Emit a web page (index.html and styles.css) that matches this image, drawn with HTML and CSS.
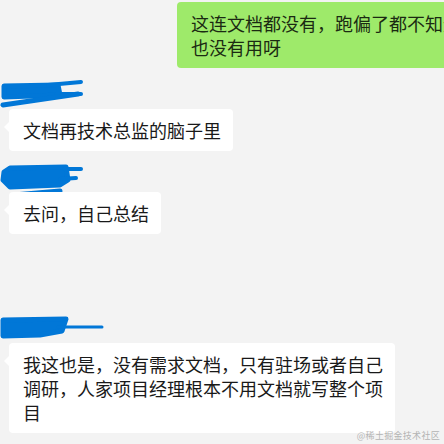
FILE: index.html
```html
<!DOCTYPE html>
<html lang="zh-CN">
<head>
  <meta charset="UTF-8" />
  <meta name="viewport" content="width=device-width, initial-scale=1.0"/>
  <title>聊天记录</title>
  <link rel="stylesheet" href="styles.css">
</head>
<body>
  <div class="chat">
    <div class="msg self">
      <div class="bubble green">这连文档都没有，跑偏了都不知道也没有用呀</div>
    </div>

    <div class="msg first">
      <svg class="name" width="90" height="30" viewBox="0 0 90 30">
        <g stroke="#0177d7" stroke-linecap="round" stroke-linejoin="round" fill="#0177d7">
          <path d="M4 7 L58 6 L60 16 L4 18 Z" stroke-width="5"/>
          <path d="M48 6 L81 3" stroke-width="4"/>
          <path d="M56 15 L81 15" stroke-width="4"/>
          <path d="M3 26 L78 15" stroke-width="5"/>
        </g>
      </svg>
      <div class="bubble">文档再技术总监的脑子里</div>
    </div>

    <div class="msg second">
      <svg class="name" width="90" height="38" viewBox="0 0 90 38">
        <g stroke="#0177d7" stroke-linecap="round" stroke-linejoin="round" fill="#0177d7">
          <path d="M10 14 L66 13 L68 26 L60 31 L10 33 L3 26 L4 18 Z" stroke-width="5"/>
          <path d="M64 15 L81 15" stroke-width="4" fill="none"/>
          <path d="M60 25 L76 24" stroke-width="4" fill="none"/>
          <path d="M14 41 L60 37" stroke-width="5" fill="none"/>
        </g>
      </svg>
      <div class="bubble">去问，自己总结</div>
    </div>

    <div class="msg third">
      <svg class="name" width="110" height="29" viewBox="0 0 110 29">
        <g stroke="#0177d7" stroke-linecap="round" stroke-linejoin="round" fill="#0177d7">
          <path d="M3 6 L66 5 L62 17 L40 21 L3 22 Z" stroke-width="5"/>
          <path d="M58 13 L102 13" stroke-width="3" fill="none"/>
        </g>
      </svg>
      <div class="bubble wide">我这也是，没有需求文档，只有驻场或者自己调研，人家项目经理根本不用文档就写整个项目</div>
    </div>

    <div class="watermark">@稀土掘金技术社区</div>
  </div>
</body>
</html>
```

FILE: styles.css
```css
body {
  margin: 0;
  background: #f3f3f3;
  font-family: "Microsoft YaHei", "Noto Sans CJK SC", sans-serif;
}

.chat {
  position: relative;
  width: 444px;
  height: 444px;
  overflow: hidden;
  padding-top: 2px;
  box-sizing: border-box;
}

.msg {
  display: flex;
  flex-direction: column;
  align-items: flex-start;
}

.name {
  display: block;
  overflow: visible;
}

.bubble {
  position: relative;
  margin-left: 9px;
  padding: 9px 12px 9px 14px;
  background: #fff;
  border-radius: 4px;
  color: #191919;
  font-size: 18px;
  line-height: 24px;
  white-space: nowrap;
}

.bubble::before {
  content: "";
  position: absolute;
  left: -5px;
  top: 13px;
  border-top: 5px solid transparent;
  border-bottom: 5px solid transparent;
  border-right: 5px solid #fff;
}

.bubble.green {
  margin-left: 177px;
  width: 270px;
  white-space: normal;
  background: #9eea6a;
  color: #1b2a12;
}

.bubble.green::before {
  display: none;
}

.bubble.wide {
  width: 360px;
  white-space: normal;
}

.first {
  margin-top: 11px;
}

.second {
  margin-top: 3px;
}

.third {
  margin-top: 80px;
}

.watermark {
  position: absolute;
  right: 4px;
  bottom: 2px;
  font-size: 9px;
  color: #b4b4b4;
  letter-spacing: 0.3px;
}
```
